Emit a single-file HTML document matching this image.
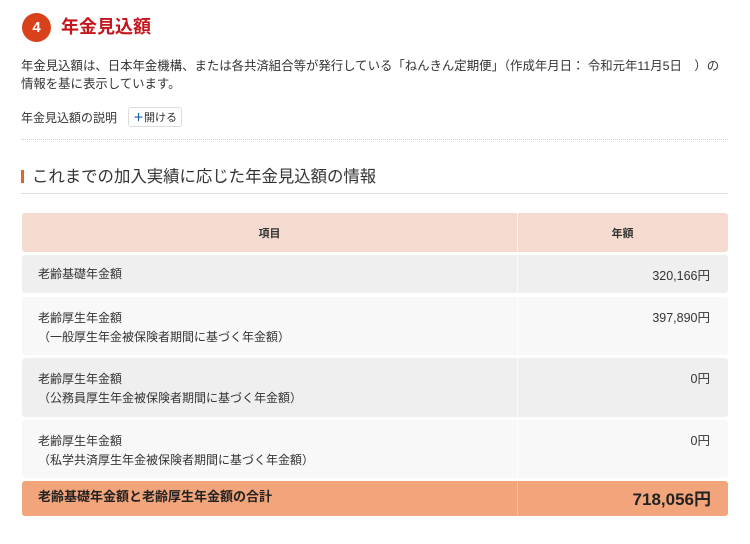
<!DOCTYPE html>
<html><head><meta charset="utf-8"><style>
body{margin:0;width:750px;height:544px;background:#fff;font-family:"Liberation Sans","Noto Sans CJK JP",sans-serif;color:#333;position:relative;overflow:hidden}
.a{position:absolute}
.row{position:absolute;left:22px;width:706px;border-radius:3px}
.c1{position:absolute;left:16px;font-size:12px;line-height:19px}
.c2{position:absolute;right:18px;font-size:12.5px;text-align:right}
.div{position:absolute;left:495px;top:0;bottom:0;width:1px;background:rgba(255,255,255,.7)}
</style></head><body>
<div class="a" style="left:22px;top:13px;width:29px;height:29px;border-radius:50%;background:#d9411a;color:#fff;font-weight:bold;font-size:15px;line-height:29px;text-align:center">4</div>
<div class="a" style="left:61px;top:14px;font-size:18px;font-weight:bold;color:#c4161c;line-height:26px">年金見込額</div>
<div class="a" style="left:21px;top:57px;font-size:12.4px;line-height:18px;width:725px;white-space:nowrap">年金見込額は、日本年金機構、または各共済組合等が発行している「ねんきん定期便」（作成年月日： 令和元年11月5日　）の<br>情報を基に表示しています。</div>
<div class="a" style="left:21px;top:110px;font-size:12px;line-height:16px">年金見込額の説明</div>
<div class="a" style="left:128px;top:107px;width:54px;height:20px;border:1px solid #ddd;border-radius:3px;font-size:11px;line-height:20px;text-align:center;box-sizing:border-box"><span style="color:#1a5fb4;font-weight:bold">＋</span>開ける</div>
<div class="a" style="left:21px;top:139px;width:707px;border-top:1px dotted #ccc"></div>
<div class="a" style="left:21px;top:170px;width:3px;height:13px;background:#e8631f"></div>
<div class="a" style="left:32px;top:166px;font-size:16.4px;line-height:22px">これまでの加入実績に応じた年金見込額の情報</div>
<div class="a" style="left:21px;top:193px;width:707px;border-top:1px solid #ddd"></div>

<div class="row" style="top:213px;height:39px;background:#f5dbcf"><div class="div"></div>
<div class="a" style="left:0;width:495px;top:12px;text-align:center;font-size:11px;font-weight:bold">項目</div>
<div class="a" style="left:495px;width:211px;top:12px;text-align:center;font-size:11px;font-weight:bold">年額</div></div>

<div class="row" style="top:255px;height:38px;background:#efefef"><div class="div"></div>
<div class="c1" style="top:10px">老齢基礎年金額</div><div class="c2" style="top:10px">320,166円</div></div>

<div class="row" style="top:297px;height:58px;background:#f8f8f8"><div class="div"></div>
<div class="c1" style="top:12px">老齢厚生年金額<br>（一般厚生年金被保険者期間に基づく年金額）</div><div class="c2" style="top:10px">397,890円</div></div>

<div class="row" style="top:358px;height:59px;background:#efefef"><div class="div"></div>
<div class="c1" style="top:12px">老齢厚生年金額<br>（公務員厚生年金被保険者期間に基づく年金額）</div><div class="c2" style="top:10px">0円</div></div>

<div class="row" style="top:420px;height:58px;background:#f8f8f8"><div class="div"></div>
<div class="c1" style="top:12px">老齢厚生年金額<br>（私学共済厚生年金被保険者期間に基づく年金額）</div><div class="c2" style="top:10px">0円</div></div>

<div class="row" style="top:481px;height:35px;background:#f2a47b"><div class="div" style="background:rgba(255,255,255,.3)"></div>
<div class="c1" style="top:6px;font-size:13px;font-weight:bold;color:#222">老齢基礎年金額と老齢厚生年金額の合計</div>
<div class="c2" style="top:4px;font-size:17px;font-weight:bold;color:#222;right:17px">718,056円</div></div>
</body></html>
